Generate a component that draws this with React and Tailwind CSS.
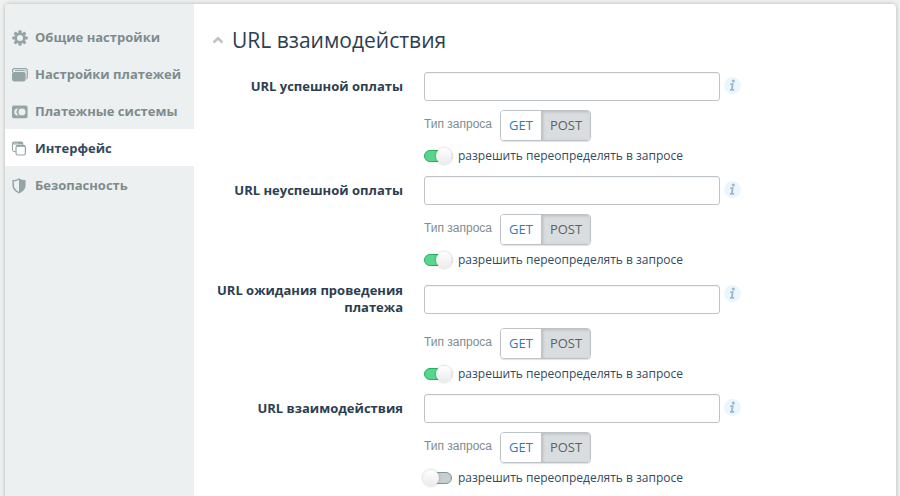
import React, { useState } from 'react';

const menu = [
  { id: 'general', title: 'Общие настройки', icon: GearIcon },
  { id: 'payments', title: 'Настройки платежей', icon: WalletIcon },
  { id: 'systems', title: 'Платежные системы', icon: CashIcon },
  { id: 'interface', title: 'Интерфейс', icon: WindowsIcon },
  { id: 'security', title: 'Безопасность', icon: ShieldIcon },
];

const fields = [
  { id: 'success', label: 'URL успешной оплаты', override: true },
  { id: 'fail', label: 'URL неуспешной оплаты', override: true },
  { id: 'pending', label: 'URL ожидания проведения платежа', override: true },
  { id: 'interaction', label: 'URL взаимодействия', override: false },
];

function GearIcon() {
  return (
    <svg width="16" height="16" viewBox="0 0 16 16" aria-hidden="true">
      <g fill="#95a5a6">
        <rect x="6.4" y="0.2" width="3.2" height="15.6" rx="1" />
        <rect x="6.4" y="0.2" width="3.2" height="15.6" rx="1" transform="rotate(45 8 8)" />
        <rect x="6.4" y="0.2" width="3.2" height="15.6" rx="1" transform="rotate(90 8 8)" />
        <rect x="6.4" y="0.2" width="3.2" height="15.6" rx="1" transform="rotate(135 8 8)" />
        <circle cx="8" cy="8" r="5.7" />
      </g>
      <circle cx="8" cy="8" r="3" fill="#ecf0f1" />
    </svg>
  );
}

function WalletIcon() {
  return (
    <svg width="16" height="16" viewBox="0 0 16 16" aria-hidden="true">
      <path d="M0.6 5V3.6Q0.6 1.7 2.6 1.7H13.2Q15.2 1.7 15.2 3.6V10.4Q15.2 11.6 14.4 12" fill="none" stroke="#95a5a6" strokeWidth="1.2" />
      <path d="M3 3.6H12.6Q13.2 3.6 13.2 4.4" fill="none" stroke="#95a5a6" strokeWidth="1" />
      <rect x="0" y="5" width="13.6" height="9.4" rx="1.8" fill="#95a5a6" />
    </svg>
  );
}

function CashIcon() {
  return (
    <svg width="16" height="16" viewBox="0 0 16 16" aria-hidden="true">
      <rect x="0" y="1.6" width="15.6" height="12.6" rx="1.8" fill="#95a5a6" />
      <rect x="2.2" y="4.4" width="11.2" height="7" rx="3.4" fill="#ecf0f1" />
      <circle cx="8.9" cy="7.9" r="4.1" fill="#95a5a6" />
      <circle cx="9.9" cy="7.9" r="3.4" fill="#ecf0f1" />
      <circle cx="4.6" cy="7.9" r="0.9" fill="#95a5a6" opacity="0.5" />
    </svg>
  );
}

function WindowsIcon() {
  return (
    <svg width="16" height="16" viewBox="0 0 16 16" aria-hidden="true">
      <path d="M3.6 10.5H2Q0.5 10.5 0.5 9V2.5Q0.5 1 2 1H9.4Q10.8 1 10.8 2.5V4" fill="none" stroke="#95a5a6" strokeWidth="1" />
      <path d="M0.5 1H10.8V3.6H0.5z" fill="#95a5a6" />
      <path d="M2.2 2.2H3.4M4.6 2.2H5.8" stroke="#fff" strokeWidth="0.8" />
      <rect x="4" y="4.6" width="9.4" height="9.4" rx="1.8" fill="#fff" stroke="#95a5a6" strokeWidth="1.2" />
      <path d="M4.4 4.2H13V5.8H4.4z" fill="#95a5a6" />
    </svg>
  );
}

function ShieldIcon() {
  return (
    <svg width="16" height="16" viewBox="0 0 16 16" aria-hidden="true">
      <path d="M7 1Q9.4 2.7 12.8 2.7V7.4Q12.8 11.8 7 14.6Q1.2 11.8 1.2 7.4V2.7Q4.6 2.7 7 1z" fill="#ecf0f1" stroke="#95a5a6" strokeWidth="1.5" />
      <path d="M7 1Q9.4 2.7 12.8 2.7V7.4Q12.8 11.8 7 14.6z" fill="#95a5a6" />
    </svg>
  );
}

function InfoIcon() {
  return (
    <svg width="17" height="17" viewBox="0 0 17 17" aria-hidden="true">
      <circle cx="8.5" cy="8.5" r="8.5" fill="#eaf6fe" />
      <circle cx="9.3" cy="4" r="1.5" fill="#9fb6c9" />
      <path d="M6.2 7.1H8.7L7.8 12.6M6 12.8H10.2" fill="none" stroke="#9fb6c9" strokeWidth="1.8" />
    </svg>
  );
}

function Switch({ id, checked, onChange }) {
  return (
    <span className="relative flex h-4 w-7 items-center">
      <input id={id} type="checkbox" checked={checked} onChange={onChange} className="peer absolute inset-0 z-10 cursor-pointer opacity-0" />
      <span className="h-3 w-full rounded-full border border-[#7f9596] bg-[#c5cfd1] peer-checked:border-[#27ae60] peer-checked:bg-[#58d68d]" />
      <span className="absolute -left-px size-4 rounded-full bg-gradient-to-b from-white to-[#ebebeb] shadow-[0_0_2px_1px_rgba(0,0,0,0.14)] peer-checked:left-3" />
    </span>
  );
}

function UrlField({ field }) {
  const [url, setUrl] = useState('');
  const [method, setMethod] = useState('POST');
  const [override, setOverride] = useState(field.override);

  return (
    <div className="grid grid-cols-[191px_minmax(0,1fr)] gap-x-[21px]">
      <label htmlFor={`url-${field.id}`} className="self-center pt-[2px] pb-[3px] text-right text-[13px] leading-[17px] font-bold text-[#2c3e50]">
        {field.label}
      </label>
      <div className="flex items-center gap-1">
        <input
          id={`url-${field.id}`}
          type="text"
          value={url}
          onChange={(e) => setUrl(e.target.value)}
          className="h-[29px] w-full max-w-[296px] rounded-[3px] border border-[#bdc3c7] bg-white px-2 text-[13px] shadow-[inset_0_1px_1px_rgba(0,0,0,0.05)] outline-none"
        />
        <button type="button" aria-label="Справка" className="mt-[5px] self-start">
          <InfoIcon />
        </button>
      </div>

      <div className="col-start-2 mt-[9px] flex items-start gap-2">
        <span className="mt-1 font-['Liberation_Sans',sans-serif] text-[12px] leading-5 text-[#7f8c8d]">Тип запроса</span>
        <div className="flex h-[31px] divide-x divide-[#bdc3c7] overflow-hidden rounded-[4px] border border-[#bdc3c7] text-[13px] shadow-[0_1px_1px_rgba(0,0,0,0.12)]">
          {['GET', 'POST'].map((name) => (
            <button
              key={name}
              type="button"
              aria-pressed={method === name}
              onClick={() => setMethod(name)}
              className={
                method === name
                  ? 'bg-[#d9dde0] px-2 text-[#5c6265] shadow-[inset_1px_1px_3px_rgba(0,0,0,0.15)]'
                  : 'bg-white px-2 text-[#2980b9]'
              }
            >
              {name}
            </button>
          ))}
        </div>
      </div>

      <div className="col-start-2 mt-[7px] flex items-center gap-1.5 pb-3">
        <Switch id={`override-${field.id}`} checked={override} onChange={(e) => setOverride(e.target.checked)} />
        <label htmlFor={`override-${field.id}`} className="text-[12px] leading-4 text-[#34495e]">
          разрешить переопределять в запросе
        </label>
      </div>
    </div>
  );
}

function App() {
  const [active, setActive] = useState('interface');

  return (
    <div className="h-screen overflow-hidden bg-[#eff1f1] pt-1 pr-1 pl-[5px] font-['Open_Sans','Noto_Sans',sans-serif]">
      <div className="flex min-h-screen overflow-hidden rounded-t-[4px] bg-white shadow-[0_0_4px_rgba(0,0,0,0.25)]">
        <nav className="w-[189px] shrink-0 bg-[#ecf0f1] pt-[14px]">
          {menu.map(({ id, title, icon: Icon }) => (
            <a
              key={id}
              href={`#${id}`}
              onClick={() => setActive(id)}
              className={
                active === id
                  ? 'flex h-[37px] items-center gap-[7px] bg-white pt-0.5 pl-[7px] text-[13px] font-bold text-[#34495e]'
                  : 'flex h-[37px] items-center gap-[7px] pt-0.5 pl-[7px] text-[13px] font-bold text-[#7f8c8d]'
              }
            >
              <Icon />
              {title}
            </a>
          ))}
        </nav>

        <main className="min-w-0 flex-1 pt-5 pl-[18px]">
          <h2 className="mb-4 text-[21px] leading-8 text-[#2c3e50]">
            <button type="button" className="flex items-center gap-2">
              <svg width="12" height="8" viewBox="0 0 12 8" aria-hidden="true">
                <path d="M1.5 6.5L6 2.2L10.5 6.5" fill="none" stroke="#bdc3c7" strokeWidth="2.6" />
              </svg>
              URL взаимодействия
            </button>
          </h2>
          <form>
            {fields.map((field) => (
              <UrlField key={field.id} field={field} />
            ))}
          </form>
        </main>
      </div>
    </div>
  );
}

export default App;
